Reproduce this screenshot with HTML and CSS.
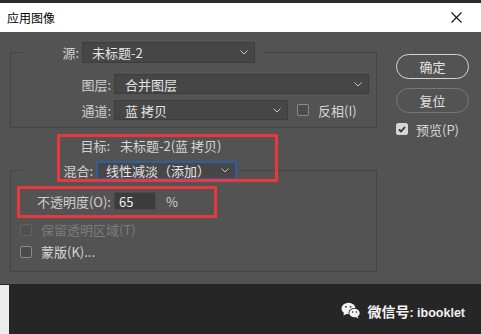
FILE: index.html
```html
<!DOCTYPE html>
<html>
<head>
    <link rel="stylesheet" href="styles.css">
</head>
<body>

    <div class="top-strip"></div>
    <div class="titlebar">
        <span class="title">应用图像</span>
        <svg class="close" width="11" height="11" viewBox="0 0 11 11">
            <path d="M0.5 0.5 L10.5 10.5 M10.5 0.5 L0.5 10.5" stroke="#111" stroke-width="1.1" fill="none"/>
        </svg>
    </div>

    <div class="dialog">
        <div class="main">
            <fieldset class="group group-src">
                <legend class="legend legend-src">
                    <span class="lbl lbl-src">源:</span>
                    <div class="select select-src">
                        <span>未标题-2</span>
                        <svg width="8" height="5" viewBox="0 0 8 5"><polyline points="0.5,0.5 4,4 7.5,0.5" stroke="#c4c4c4" fill="none"/></svg>
                    </div>
                </legend>
                <div class="row">
                    <span class="lbl">图层:</span>
                    <div class="select select-layer">
                        <span>合并图层</span>
                        <svg width="8" height="5" viewBox="0 0 8 5"><polyline points="0.5,0.5 4,4 7.5,0.5" stroke="#c4c4c4" fill="none"/></svg>
                    </div>
                </div>
                <div class="row row-channel">
                    <span class="lbl">通道:</span>
                    <div class="select select-channel">
                        <span>蓝 拷贝</span>
                        <svg width="8" height="5" viewBox="0 0 8 5"><polyline points="0.5,0.5 4,4 7.5,0.5" stroke="#c4c4c4" fill="none"/></svg>
                    </div>
                    <span class="check check-invert"></span>
                    <span class="check-text">反相(I)</span>
                </div>
            </fieldset>

            <div class="target-row">
                <span class="lbl">目标:</span>
                <span class="target-value">未标题-2(蓝 拷贝)</span>
            </div>

            <fieldset class="group group-blend">
                <legend class="legend legend-blend">
                    <span class="lbl lbl-blend">混合:</span>
                    <div class="select select-blend">
                        <span>线性减淡（添加）</span>
                        <svg width="8" height="5" viewBox="0 0 8 5"><polyline points="0.5,0.5 4,4 7.5,0.5" stroke="#c4c4c4" fill="none"/></svg>
                    </div>
                </legend>
                <div class="row row-opacity">
                    <span class="lbl">不透明度(O):</span>
                    <div class="field">65</div>
                    <span class="percent">%</span>
                </div>
                <div class="row row-check row-preserve">
                    <span class="check disabled"></span>
                    <span class="check-text disabled">保留透明区域(T)</span>
                </div>
                <div class="row row-check row-mask">
                    <span class="check"></span>
                    <span class="check-text">蒙版(K)...</span>
                </div>
            </fieldset>
        </div>

        <div class="side">
            <div class="btn btn-primary">确定</div>
            <div class="btn">复位</div>
            <div class="preview">
                <span class="check checked">
                    <svg width="8" height="7" viewBox="0 0 8 7"><polyline points="1,3.5 3,5.5 7,1" stroke="#333" stroke-width="1.8" fill="none"/></svg>
                </span>
                <span class="check-text">预览(P)</span>
            </div>
        </div>

        <div class="mark mark-target"></div>
        <div class="mark mark-opacity"></div>
    </div>

    <div class="footer">
        <div class="edge"></div>
        <div class="watermark">
            <svg width="20" height="17" viewBox="0 0 20 17">
                <ellipse cx="7.5" cy="6.5" rx="7" ry="5.8" fill="#f2f2f2"/>
                <polygon points="3,10 2.5,13.5 6.5,11.5" fill="#f2f2f2"/>
                <ellipse cx="13.5" cy="11" rx="6" ry="5" fill="#262626"/>
                <ellipse cx="13.5" cy="11" rx="5.2" ry="4.3" fill="#f2f2f2"/>
                <polygon points="16.5,14 17.5,16.5 14.5,15" fill="#f2f2f2"/>
                <circle cx="5" cy="4.8" r="0.9" fill="#262626"/>
                <circle cx="9.6" cy="4.8" r="0.9" fill="#262626"/>
                <circle cx="11.6" cy="10" r="0.75" fill="#262626"/>
                <circle cx="15.4" cy="10" r="0.75" fill="#262626"/>
            </svg>
            <span class="wm-text">微信号<span class="wm-latin">: ibooklet</span></span>
        </div>
    </div>

</body>
</html>
```

FILE: styles.css
```css
body {
    margin: 0;
    width: 481px;
    height: 334px;
    overflow: hidden;
    font-family: "Noto Sans CJK SC", "Noto Sans", sans-serif;
    font-size: 13px;
    background-color: #262626;
}
.top-strip {
    height: 3px;
    background-color: #2b2b2b;
}
.titlebar {
    height: 29px;
    background-color: #fff;
    display: flex;
    align-items: center;
    justify-content: space-between;
    padding-left: 7px;
    padding-right: 19px;
}
.title {
    font-size: 12px;
    color: #000;
    line-height: 1;
}
.dialog {
    position: relative;
    box-sizing: border-box;
    height: 252px;
    background-color: #535353;
    display: flex;
    padding: 10px 0 0 10px;
    color: #d0d0d0;
    line-height: 1;
}
.main {
    width: 367px;
}
.group {
    margin: 0;
    min-width: 0;
    border: 1px solid #454545;
    padding: 0;
}
.group-src {
    padding: 11px 0 7px 0;
}
.group-blend {
    margin-top: 6px;
    padding: 12px 0 13px 0;
}
.legend {
    display: flex;
    align-items: center;
    margin-left: 12px;
    padding: 0 8px 0 0;
}
.legend-blend {
    padding-right: 2px;
}
.lbl {
    display: inline-block;
    width: 100px;
    text-align: right;
    white-space: nowrap;
}
.lbl-src {
    width: 56px;
}
.lbl-blend {
    width: 70px;
}
.select {
    box-sizing: border-box;
    display: flex;
    align-items: center;
    justify-content: space-between;
    margin-left: 3px;
    padding: 0 6px 0 10px;
    background-color: #464646;
    border: 1px solid #3d3d3d;
    color: #e4e4e4;
}
.select-src {
    width: 173px;
    height: 21px;
    padding-left: 9px;
}
.select-layer {
    width: 255px;
    height: 20px;
}
.select-channel {
    width: 174px;
    height: 20px;
}
.select-blend {
    width: 141px;
    height: 19px;
    padding-left: 8px;
    border: 2px solid #2f5e9e;
    background-color: #474747;
}
.row {
    display: flex;
    align-items: center;
    height: 20px;
}
.row-channel {
    margin-top: 6px;
}
.check {
    box-sizing: border-box;
    display: inline-flex;
    align-items: center;
    justify-content: center;
    width: 12px;
    height: 12px;
    border: 1px solid #8a8a8a;
    border-radius: 2px;
    background-color: #4b4b4b;
}
.check.disabled {
    border-color: #626262;
    background-color: #505050;
}
.check.checked {
    border-color: #d6d6d6;
    background-color: #d6d6d6;
}
.check-text {
    margin-left: 9px;
    color: #d6d6d6;
    white-space: nowrap;
}
.check-text.disabled {
    color: #7c7c7c;
}
.check-invert {
    margin-left: 9px;
}
.target-row {
    display: flex;
    align-items: center;
    height: 20px;
    margin-top: 7px;
}
.target-value {
    margin-left: 10px;
    color: #d6d6d6;
}
.row-opacity {
    height: 18px;
}
.field {
    box-sizing: border-box;
    width: 42px;
    height: 18px;
    margin-left: 3px;
    padding-left: 4px;
    display: flex;
    align-items: center;
    background-color: #3c3c3c;
    border: 1px solid #4a4a4a;
    color: #efefef;
}
.percent {
    margin-left: 10px;
}
.row-check {
    height: 13px;
    padding-left: 9px;
}
.row-preserve {
    margin-top: 13px;
}
.row-mask {
    margin-top: 9px;
}
.side {
    margin-left: 19px;
    padding-top: 12px;
    width: 73px;
}
.btn {
    box-sizing: border-box;
    width: 73px;
    height: 25px;
    border: 1.5px solid #777;
    border-radius: 13px;
    display: flex;
    align-items: center;
    justify-content: center;
    color: #e2e2e2;
    margin-bottom: 9px;
}
.btn-primary {
    border-color: #d4d4d4;
}
.preview {
    display: flex;
    align-items: center;
    margin-top: 10px;
    height: 12px;
}
.preview .check-text {
    margin-left: 8px;
}
.mark {
    position: absolute;
    box-sizing: border-box;
    border: 3px solid #e6383f;
}
.mark-target {
    left: 57px;
    top: 102px;
    width: 221px;
    height: 48px;
}
.mark-opacity {
    left: 17px;
    top: 154px;
    width: 200px;
    height: 32px;
}
.footer {
    height: 50px;
    display: flex;
}
.edge {
    width: 9px;
    margin-top: 1px;
    background-color: #ececec;
}
.watermark {
    margin-left: auto;
    margin-right: 16px;
    margin-top: 18px;
    height: 17px;
    display: flex;
    align-items: center;
    color: #f2f2f2;
    font-size: 14px;
    font-weight: bold;
}
.wm-text {
    margin-left: 6px;
    white-space: nowrap;
}
.wm-latin {
    font-family: "Liberation Sans", sans-serif;
    font-size: 12.5px;
}
```
